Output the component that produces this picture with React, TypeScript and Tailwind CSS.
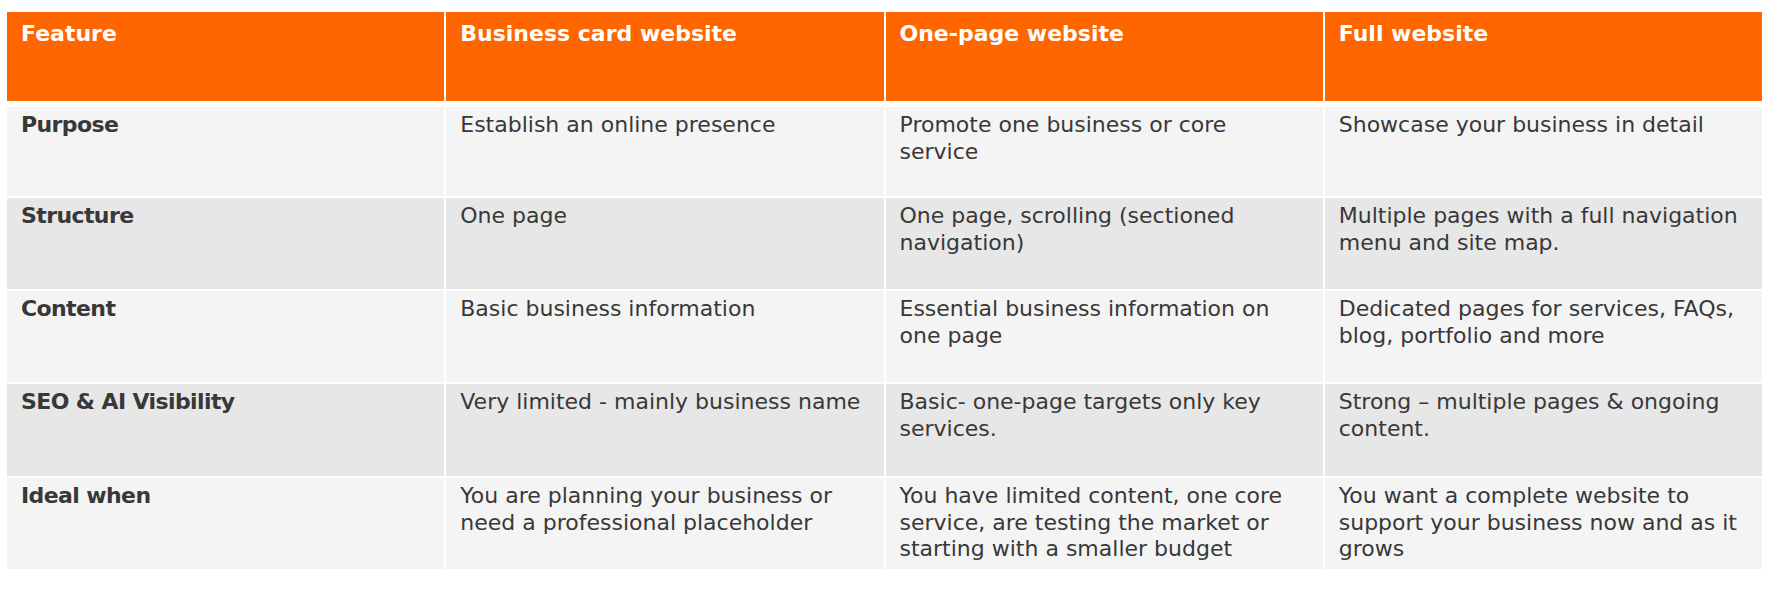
import React from "react";

const headers = ["Feature", "Business card website", "One-page website", "Full website"];

const rows: { label: string; cells: string[][] }[] = [
  {
    label: "Purpose",
    cells: [
      ["Establish an online presence"],
      ["Promote one business or core", "service"],
      ["Showcase your business in detail"],
    ],
  },
  {
    label: "Structure",
    cells: [
      ["One page"],
      ["One page, scrolling (sectioned", "navigation)"],
      ["Multiple pages with a full navigation", "menu and site map."],
    ],
  },
  {
    label: "Content",
    cells: [
      ["Basic business information"],
      ["Essential business information on", "one page"],
      ["Dedicated pages for services, FAQs,", "blog, portfolio and more"],
    ],
  },
  {
    label: "SEO & AI Visibility",
    cells: [
      ["Very limited - mainly business name"],
      ["Basic- one-page targets only key", "services."],
      ["Strong \u2013 multiple pages & ongoing", "content."],
    ],
  },
  {
    label: "Ideal when",
    cells: [
      ["You are planning your business or", "need a professional placeholder"],
      ["You have limited content, one core", "service, are testing the market or", "starting with a smaller budget"],
      ["You want a complete website to", "support your business now and as it", "grows"],
    ],
  },
];

const rowHeights = ["h-[89px]", "h-[91px]", "h-[91px]", "h-[92px]", "h-[91px]"];

export default function App() {
  return (
    <div
      className="w-[1778px] h-[598px] bg-white pt-[12px] pl-[7px]"
      style={{ fontFamily: '"DejaVu Sans", "Open Sans", sans-serif' }}
    >
      <div className="w-[1755px] flex flex-col">
        <div className="grid grid-cols-4 gap-x-[2px] h-[89px] mb-[6px]">
          {headers.map((h) => (
            <div key={h} className="bg-[#ff6600] px-[14px] pt-[9px] text-white font-bold text-[22px] leading-[26.6px] whitespace-nowrap">
              {h}
            </div>
          ))}
        </div>
        <div className="flex flex-col gap-y-[2px]">
          {rows.map((r, i) => {
            const bg = i % 2 === 0 ? "bg-[#f4f4f4]" : "bg-[#e7e7e7]";
            return (
              <div key={r.label} className={`grid grid-cols-4 gap-x-[2px] ${rowHeights[i]}`}>
                <div className={`${bg} px-[14px] pt-[5px] font-bold text-[22px] leading-[26.6px] tracking-[-0.6px] text-[#383838] whitespace-nowrap`}>
                  {r.label}
                </div>
                {r.cells.map((lines, j) => (
                  <div key={j} className={`${bg} px-[14px] pt-[5px] text-[22px] leading-[26.6px] text-[#383838]`}>
                    {lines.map((l, k) => (
                      <div key={k} className="whitespace-nowrap">{l}</div>
                    ))}
                  </div>
                ))}
              </div>
            );
          })}
        </div>
      </div>
    </div>
  );
}
